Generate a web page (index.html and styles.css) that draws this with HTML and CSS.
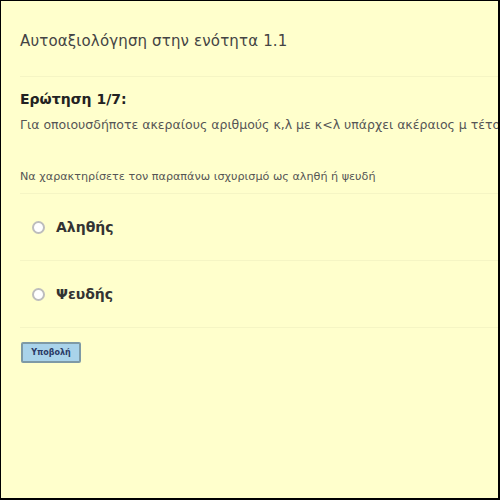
FILE: index.html
```html
<!DOCTYPE html>
<html lang="el">
<head>
<meta charset="utf-8">
<link rel="stylesheet" href="styles.css">
</head>
<body>
<div class="frame">
  <h1 class="title">Αυτοαξιολόγηση στην ενότητα 1.1</h1>
  <div class="sep"></div>
  <div class="question">
    <div class="qnum">Ερώτηση 1/7:</div>
    <div class="qtext">Για οποιουσδήποτε ακεραίους αριθμούς κ,λ με κ&lt;λ υπάρχει ακέραιος μ τέτοιος ώστε κ&lt;μ&lt;λ</div>
    <div class="instr">Να χαρακτηρίσετε τον παραπάνω ισχυρισμό ως αληθή ή ψευδή</div>
  </div>
  <div class="sep"></div>
  <label class="option"><span class="radio"></span><span class="olabel">Αληθής</span></label>
  <div class="sep"></div>
  <label class="option"><span class="radio"></span><span class="olabel">Ψευδής</span></label>
  <div class="sep"></div>
  <div class="actions"><button class="submit">Υποβολή</button></div>
</div>
</body>
</html>
```
FILE: styles.css
```css
html, body {
  margin: 0;
  padding: 0;
  background: #ffffcc;
}
.frame {
  box-sizing: border-box;
  width: 500px;
  height: 500px;
  border-style: solid;
  border-color: #000;
  border-width: 1px 2px 2px 1px;
  background: #ffffcc;
  overflow: hidden;
  font-family: "DejaVu Sans", Verdana, sans-serif;
  padding: 0 0 0 19px;
}
.title {
  margin: 0;
  padding: 30px 0 0 0;
  height: 75px;
  box-sizing: border-box;
  font-size: 15px;
  font-weight: normal;
  color: #444;
  line-height: 20px;
  letter-spacing: 0.15px;
}
.sep {
  height: 1px;
  background: #f5f5c4;
}
.question {
  padding-top: 14px;
  height: 116px;
  box-sizing: border-box;
}
.qnum {
  font-weight: bold;
  font-size: 14px;
  color: #222;
  line-height: 16px;
}
.qtext {
  font-size: 12.5px;
  color: #555;
  white-space: nowrap;
  line-height: 16px;
  margin-top: 10px;
}
.instr {
  font-size: 11.2px;
  color: #555;
  line-height: 14px;
  margin-top: 37px;
}
.option {
  display: flex;
  align-items: center;
  height: 66px;
  padding-left: 12px;
  gap: 11px;
}
.radio {
  width: 9px;
  height: 9px;
  border: 2px solid #bdbdbd;
  border-radius: 50%;
  background: #fff;
}
.olabel {
  font-weight: bold;
  font-size: 14px;
  color: #333;
}
.actions {
  padding-top: 12px;
}
.submit {
  font-family: "DejaVu Sans", Verdana, sans-serif;
  font-size: 8px;
  font-weight: bold;
  color: #2a3a66;
  background: #a9d3ea;
  border: 2px solid #7e9aa6;
  border-radius: 2px;
  width: 60px;
  height: 21px;
  padding: 0;
  margin-left: 1px;
}
```
